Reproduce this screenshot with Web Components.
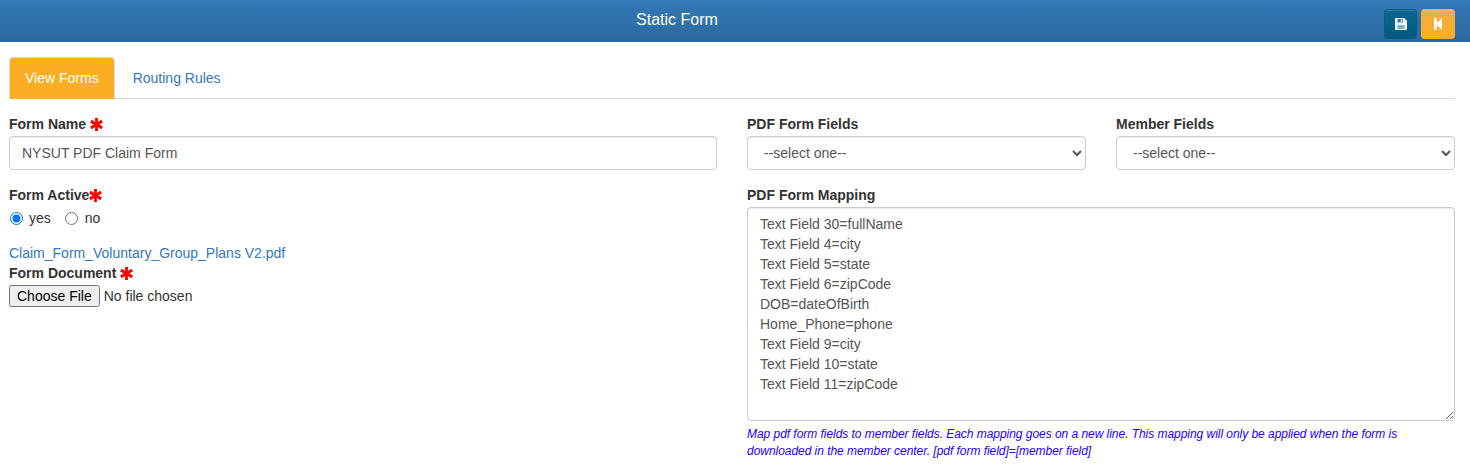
<!DOCTYPE html>
<html lang="en">
<head>
  <meta charset="UTF-8">
  <title>Static Form</title>
  <style type="text/css">
    html, body {
      margin: 0;
      padding: 0;
      background: #fff;
      font-family: "Liberation Sans", Arial, sans-serif;
      font-size: 14px;
      line-height: 20px;
      color: #333;
    }
  </style>
</head>
<body>
  <app-header>Static Form</app-header>
  <form-page></form-page>

  <script type="text/javascript">
    const STAR = `<svg class="star" width="13" height="13" viewBox="0 0 13 13" aria-hidden="true"><path fill="#f00" d="M5 0h3l-.2 4 3.500-2.200 1.700 2.700L9.200 6.500 13 8.500l-1.700 2.700L7.800 9l.2 4H5l.2-4-3.500 2.200L0 8.500l3.800-2L0 4.500l1.700-2.700L5.200 4z"/></svg>`

    customElements.define("app-header", class AppHeader extends HTMLElement {
      constructor() {
        super()
        this.attachShadow({ mode: "open" }).innerHTML = `
          <style type="text/css">
            :host {
              display: grid;
              grid-template-columns: 1fr auto;
              height: 42px;
              box-sizing: border-box;
              padding: 9px 15px 0 0;
              background: linear-gradient(#337ab7, #2a699f);
              color: #fff;
            }
            h1 {
              margin: 1px 0 0;
              font-size: 16px;
              font-weight: 400;
              line-height: 20px;
              text-align: center;
              transform: translateX(-15px);
            }
            .actions { display: flex; gap: 4px; }
            button {
              display: flex;
              align-items: center;
              justify-content: center;
              width: 33px;
              height: 30px;
              padding: 0;
              border: 1px solid #0b5a80;
              border-radius: 3px;
              background: linear-gradient(#09678f, #04597f);
              box-shadow: inset 0 1px 0 rgba(255,255,255,.15);
            }
            button.warn {
              width: 34px;
              border-color: #f7ae33;
              background: linear-gradient(#f4ae48, #fbae22);
            }
          </style>
          <h1><slot></slot></h1>
          <div class="actions">
            <button type="button" title="Save">
              <svg width="12" height="12" viewBox="0 0 12 12"><path fill="#f4f8fb" d="M1 0h8.200L12 2.800V11a1 1 0 0 1-1 1H1a1 1 0 0 1-1-1V1a1 1 0 0 1 1-1z"/><path fill="#2f7ea3" d="M2.500 1h5.500v3.500H2.500z"/><path fill="#f4f8fb" d="M5.800 1.400h1.400v2.600H5.800z"/><path fill="#7fb2cb" d="M2.500 7h7v4H2.500z"/></svg>
            </button>
            <button type="button" class="warn" title="Back">
              <svg width="10" height="12" viewBox="0 0 10 12"><path fill="#fff" d="M1 0h2.800v5L9 0v12L3.800 7v5H1z"/></svg>
            </button>
          </div>
        `
      }
    })

    customElements.define("tab-bar", class TabBar extends HTMLElement {
      constructor() {
        super()
        this.attachShadow({ mode: "open" }).innerHTML = `
          <style type="text/css">
            :host {
              display: flex;
              height: 42px;
              box-sizing: border-box;
              border-bottom: 1px solid #ddd;
            }
            a {
              display: block;
              height: 42px;
              box-sizing: border-box;
              padding: 10px 15px 0;
              margin-right: 2px;
              border: 1px solid transparent;
              border-radius: 4px 4px 0 0;
              color: #337ab7;
              text-decoration: none;
              line-height: 20px;
            }
            a.active {
              background: #fbae22;
              border-color: #ddd #ddd transparent;
              color: #fff;
            }
          </style>
          <a class="active" href="#">View Forms</a>
          <a href="#">Routing Rules</a>
        `
      }
    })

    customElements.define("form-field", class FormField extends HTMLElement {
      constructor() {
        super()
        const required = this.hasAttribute("required")
        this.attachShadow({ mode: "open" }).innerHTML = `
          <style type="text/css">
            :host { display: block; min-width: 0; }
            label {
              display: flex;
              align-items: center;
              gap: ${this.getAttribute("gap") || 4}px;
              height: 20px;
              font-weight: 700;
              color: #333;
            }
            .star { flex: none; }
            .control { margin-top: 2px; }
          </style>
          <label><span>${this.getAttribute("label")}</span>${required ? STAR : ""}</label>
          <div class="control"><slot></slot></div>
        `
      }
    })

    customElements.define("form-page", class FormPage extends HTMLElement {
      constructor() {
        super()
        const mapping = [
          "Text Field 30=fullName",
          "Text Field 4=city",
          "Text Field 5=state",
          "Text Field 6=zipCode",
          "DOB=dateOfBirth",
          "Home_Phone=phone",
          "Text Field 9=city",
          "Text Field 10=state",
          "Text Field 11=zipCode"
        ].join("\n")

        this.attachShadow({ mode: "open" }).innerHTML = `
          <style type="text/css">
            :host {
              display: block;
              padding: 15px 15px 0 9px;
            }
            .columns {
              display: grid;
              grid-template-columns: 708px 708px;
              column-gap: 30px;
              margin-top: 15px;
            }
            .left, .right { display: flex; flex-direction: column; min-width: 0; }
            .pair { display: grid; grid-template-columns: 339px 339px; column-gap: 30px; }
            .input, select, textarea {
              display: block;
              width: 100%;
              box-sizing: border-box;
              border: 1px solid #ccc;
              border-radius: 4px;
              background: #fff;
              color: #555;
              font: 14px/20px "Liberation Sans", Arial, sans-serif;
              box-shadow: inset 0 1px 1px rgba(0,0,0,.075);
              outline: none;
            }
            .input { height: 34px; padding: 6px 12px; }
            select { height: 34px; padding: 6px 12px; }
            textarea { height: 214px; padding: 6px 12px; resize: vertical; }
            .active { margin-top: 15px; }
            .radios {
              display: flex;
              align-items: center;
              height: 20px;
              margin-top: 3px;
            }
            .radios label { display: flex; align-items: center; margin-right: 13px; }
            .radios input { margin: 0 6px 0 1px; width: 13px; height: 13px; }
            .radios label + label input { margin-right: 7px; }
            .doc { margin-top: 15px; }
            .doc a { display: block; height: 20px; color: #337ab7; text-decoration: none; }
            input[type=file] {
              display: block;
              font: 14px "Liberation Sans", Arial, sans-serif;
              color: #333;
            }
            .mapping { margin-top: 15px; }
            .help {
              margin: 5px 0 0;
              font-size: 12px;
              font-style: italic;
              line-height: 17px;
              letter-spacing: -0.04px;
              color: #2200ff;
            }
          </style>
          <tab-bar></tab-bar>
          <div class="columns">
            <div class="left">
              <form-field label="Form Name" required>
                <input class="input" type="text" value="NYSUT PDF Claim Form">
              </form-field>
              <form-field class="active" label="Form Active" gap="0" required>
                <div class="radios">
                  <label><input type="radio" name="active" checked>yes</label>
                  <label><input type="radio" name="active">no</label>
                </div>
              </form-field>
              <div class="doc">
                <a href="#">Claim_Form_Voluntary_Group_Plans V2.pdf</a>
                <form-field label="Form Document" required>
                  <input type="file">
                </form-field>
              </div>
            </div>
            <div class="right">
              <div class="pair">
                <form-field label="PDF Form Fields">
                  <select><option>--select one--</option></select>
                </form-field>
                <form-field label="Member Fields">
                  <select><option>--select one--</option></select>
                </form-field>
              </div>
              <form-field class="mapping" label="PDF Form Mapping">
                <textarea spellcheck="false"></textarea>
                <p class="help">Map pdf form fields to member fields. Each mapping goes on a new line. This mapping will only be applied when the form is downloaded in the member center. [pdf form field]=[member field]</p>
              </form-field>
            </div>
          </div>
        `
        this.shadowRoot.querySelector("textarea").value = mapping
      }
    })
  </script>
</body>
</html>
